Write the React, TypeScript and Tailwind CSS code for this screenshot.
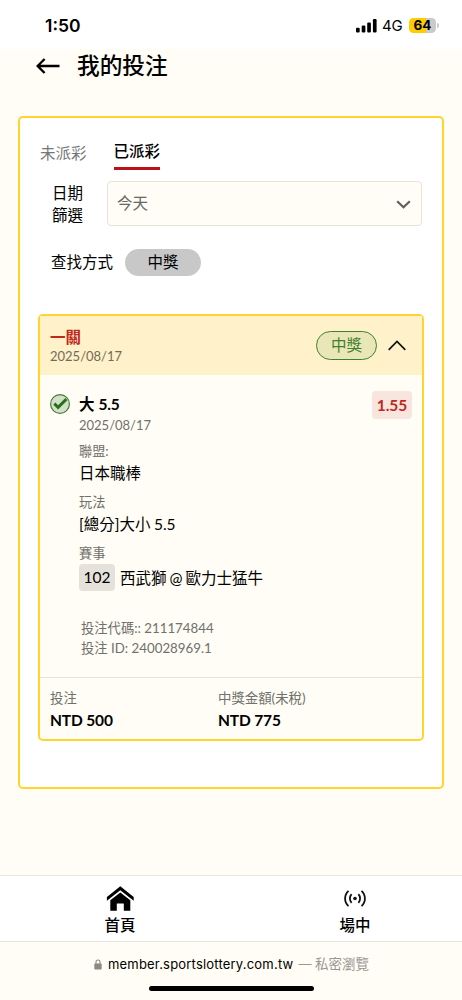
import React, { useState } from 'react';

const Signal: React.FC = () => (
    <svg width="21" height="14" viewBox="0 0 21 14">
        <rect x="0" y="8.8" width="3.7" height="4.7" rx="1.1" />
        <rect x="5.7" y="6.6" width="3.7" height="6.9" rx="1.1" />
        <rect x="11.2" y="3.6" width="3.7" height="9.9" rx="1.1" />
        <rect x="16.9" y="0.1" width="3.7" height="13.4" rx="1.1" />
    </svg>
);

const StatusBar: React.FC = () => (
    <div className="flex h-[49px] items-center bg-white pt-[2px] pr-[23px] pl-[45px] font-['Inter',sans-serif]">
        <span className="text-[17.5px] leading-6 font-semibold">1:50</span>
        <div className="ml-auto flex items-center">
            <Signal />
            <span className="mr-[1px] ml-[5px] w-[21px] text-[15px] leading-6 tracking-[-0.3px]">4G</span>
            <div className="ml-[5px] flex h-[15px] w-[27px] items-center justify-center rounded-[4.5px] bg-[linear-gradient(to_right,#ffcc00_64%,#cacaca_64%)] text-[13.5px] font-bold">
                64
            </div>
            <div className="ml-[1px] h-[5px] w-[2px] rounded-r-full bg-[#cacaca]" />
        </div>
    </div>
);

const Field: React.FC<{ label: string; children: React.ReactNode }> = ({ label, children }) => (
    <div className="mb-[7px]">
        <div className="text-[13.2px] leading-[21px] text-[#70706c]">{label}</div>
        <div className="flex h-[23px] items-center text-[15.5px] leading-[23px] whitespace-nowrap">{children}</div>
    </div>
);

const Ticket: React.FC = () => {
    const [open, setOpen] = useState(true);

    return (
        <div className="mt-[38px] h-[427px] rounded-[5px] border-2 border-[#ffd42c] bg-[#fffdf5]">
            <div className="flex h-[59px] items-center bg-[#fff1c9] pr-[15px] pl-[10px]">
                <div>
                    <div className="text-[15.5px] leading-[20px] font-bold text-[#c0271f]">一關</div>
                    <div className="text-[13px] leading-[18px] text-[#716b58]">2025/08/17</div>
                </div>
                <div className="ml-auto flex h-[29px] w-[61px] items-center justify-center rounded-full border-[1.5px] border-[#3f8130] bg-[#e9e7b8] text-[15.5px] text-[#3f8130]">
                    中獎
                </div>
                <button onClick={() => setOpen(!open)} className="ml-[10px]">
                    <svg width="20" height="12" viewBox="0 0 20 12" fill="none" stroke="#111" strokeWidth="1.7">
                        <path d="M1.7 9.8 10 1.5l8.3 8.3" />
                    </svg>
                </button>
            </div>
            {open && (
                <div className="flex h-[303px] border-b border-[#e6e2da] pt-[18px] pr-[10px] pl-[10px]">
                    <svg width="20" height="20" viewBox="0 0 20 20" fill="none" className="mt-[1px] shrink-0">
                        <circle cx="10" cy="10" r="9.4" fill="#d5dfc9" stroke="#438238" strokeWidth="1.2" />
                        <path d="M4.3 9.6 8.1 13.4 16.4 5.1" stroke="#26721c" strokeWidth="2.9" />
                    </svg>
                    <div className="ml-[9px] flex-1">
                        <div className="text-[15.5px] leading-[23px] font-semibold">
                            大 <span className="font-bold tracking-[-0.2px]">5.5</span>
                        </div>
                        <div className="mb-[7px] text-[13px] leading-[18px] text-[#70706c]">2025/08/17</div>
                        <Field label="聯盟:">日本職棒</Field>
                        <Field label="玩法">
                            <span className="[word-spacing:-0.5px]">[總分]大小 5.5</span>
                        </Field>
                        <Field label="賽事">
                            <span className="mt-[4px] mr-[5px] flex h-[27px] w-[36px] shrink-0 items-center justify-center rounded-[4px] bg-[#e5e2db]">102</span>
                            <span className="mt-[5px] [word-spacing:-0.9px]">西武獅 @ 歐力士猛牛</span>
                        </Field>
                        <div className="mt-[31px] pl-[2px] text-[13.3px] leading-[20px] text-[#70706c]">
                            <div>投注代碼:: 211174844</div>
                            <div>投注 ID: 240028969.1</div>
                        </div>
                    </div>
                    <div className="-mt-[2px] flex h-[28px] w-[40px] items-center justify-center rounded-[4px] bg-[#f8e6de] pt-[1px] text-[15.5px] font-bold text-[#c0271f]">
                        1.55
                    </div>
                </div>
            )}
            <div className="flex pt-[10px] pl-[10px]">
                <div className="w-[168px]">
                    <div className="text-[13.4px] leading-[20px] text-[#70706c]">投注</div>
                    <div className="text-[15.5px] leading-[24px] font-bold tracking-[-0.15px]">NTD 500</div>
                </div>
                <div>
                    <div className="text-[13.4px] leading-[20px] text-[#70706c]">中獎金額(未稅)</div>
                    <div className="text-[15.5px] leading-[24px] font-bold tracking-[-0.15px]">NTD 775</div>
                </div>
            </div>
        </div>
    );
};

const App: React.FC = () => {
    const [tab, setTab] = useState<'open' | 'settled'>('settled');

    return (
        <div className="flex h-[1000px] w-[462px] flex-col overflow-hidden bg-[#fffdf5] font-['Lato','Noto_Sans_CJK_TC',sans-serif] text-black">
            <StatusBar />
            <header className="flex h-[67px] items-start pt-[3px] pl-[36px]">
                <svg width="24" height="16" viewBox="0 0 24 16" fill="none" stroke="#000" strokeWidth="2.4" className="mt-[6px]">
                    <path d="M23.5 8H1.8M8.6 1 1.6 8l7 7" />
                </svg>
                <h1 className="ml-[17px] text-[22.7px] leading-[28px] font-medium">我的投注</h1>
            </header>

            <main className="mx-[18px] h-[673px] rounded-[5px] border-2 border-[#ffd42c] bg-white px-[18px]">
                <div className="flex items-start pt-[22px] pl-[2px] text-[15.5px] leading-[23px]">
                    <button
                        onClick={() => setTab('open')}
                        className={`pt-[2px] pb-[2px] ${tab === 'open' ? 'border-b-[3px] border-[#bd1118] font-medium' : 'text-[#777]'}`}
                    >
                        未派彩
                    </button>
                    <button
                        onClick={() => setTab('settled')}
                        className={`ml-[27px] h-[30px] pb-[4px] ${tab === 'settled' ? 'border-b-[3px] border-[#bd1118] font-medium' : 'text-[#777]'}`}
                    >
                        已派彩
                    </button>
                </div>
                <div className="mt-[11px] flex items-center pl-[14px]">
                    <div className="w-[55px] text-[15.5px] leading-[22px]">
                        日期
                        <br />
                        篩選
                    </div>
                    <div className="flex h-[45px] w-[315px] items-center rounded-[4px] border border-[#e6e3db] bg-[#fffdf5] pt-[1px] pr-[10px] pl-[9px] text-[15.5px] text-[#686864]">
                        今天
                        <svg width="15" height="9" viewBox="0 0 15 9" fill="none" stroke="#5f5f5b" strokeWidth="2.2" className="ml-auto">
                            <path d="M1.2 1.2 7.5 7.2l6.3-6" />
                        </svg>
                    </div>
                </div>
                <div className="mt-[23px] flex h-[27px] items-center pl-[13px] text-[15.5px]">
                    查找方式
                    <span className="ml-[12px] flex h-[27px] w-[76px] items-center justify-center rounded-full bg-[#c8c8c8]">中獎</span>
                </div>
                <Ticket />
            </main>

            <nav className="mt-auto flex h-[67px] shrink-0 overflow-hidden border-y border-[#e6e6e0] bg-white text-[15.5px] leading-[24px] font-medium">
                <div className="flex w-[240px] shrink-0 flex-col items-center pt-[10px]">
                    <svg width="28" height="25" viewBox="0 0 28 25">
                        <path d="M0.9 11 14.3 0.3 27.7 11v3.8L14.3 4.2.9 14.8z" />
                        <path d="M4.3 14.2 14.3 6.4l10 7.8V24.7h-6.5v-7.2h-7v7.2h-6.5z" />
                    </svg>
                    <span className="mt-[2px]">首頁</span>
                </div>
                <div className="flex w-[230px] shrink-0 flex-col items-center pt-[14px]">
                    <svg width="22" height="17" viewBox="0 0 22 17" fill="none" stroke="#111" strokeWidth="1.8">
                        <circle cx="11" cy="8.5" r="1.8" fill="#111" stroke="none" />
                        <path d="M7.6 4.2a6.3 6.3 0 0 0 0 8.6M14.4 4.2a6.3 6.3 0 0 1 0 8.6M4.5.8a10.4 10.4 0 0 0 0 15.4M17.5.8a10.4 10.4 0 0 1 0 15.4" />
                    </svg>
                    <span className="mt-[6px]">場中</span>
                </div>
            </nav>
            <footer className="flex h-[58px] shrink-0 flex-col items-center pt-[12px] font-['Inter','Noto_Sans_CJK_TC',sans-serif]">
                <div className="flex items-center text-[13px] leading-[20px] whitespace-nowrap">
                    <svg width="8" height="11" viewBox="0 0 8 11" className="mr-[6px] ml-[1px]">
                        <path d="M2 5V3a2 2 0 0 1 4 0v2" fill="none" stroke="#8b8a86" strokeWidth="1.1" />
                        <rect x="0.3" y="4.6" width="7.4" height="6" rx="1" fill="#8b8a86" />
                    </svg>
                    <span className="tracking-[0.2px]">member.sportslottery.com.tw</span>
                    <span className="ml-[5px] text-[#999793]">
                        — <span className="text-[13.5px]">私密瀏覽</span>
                    </span>
                </div>
                <div className="mt-[12px] h-[5px] w-[165px] rounded-full bg-black" />
            </footer>
        </div>
    );
};

export default App;
